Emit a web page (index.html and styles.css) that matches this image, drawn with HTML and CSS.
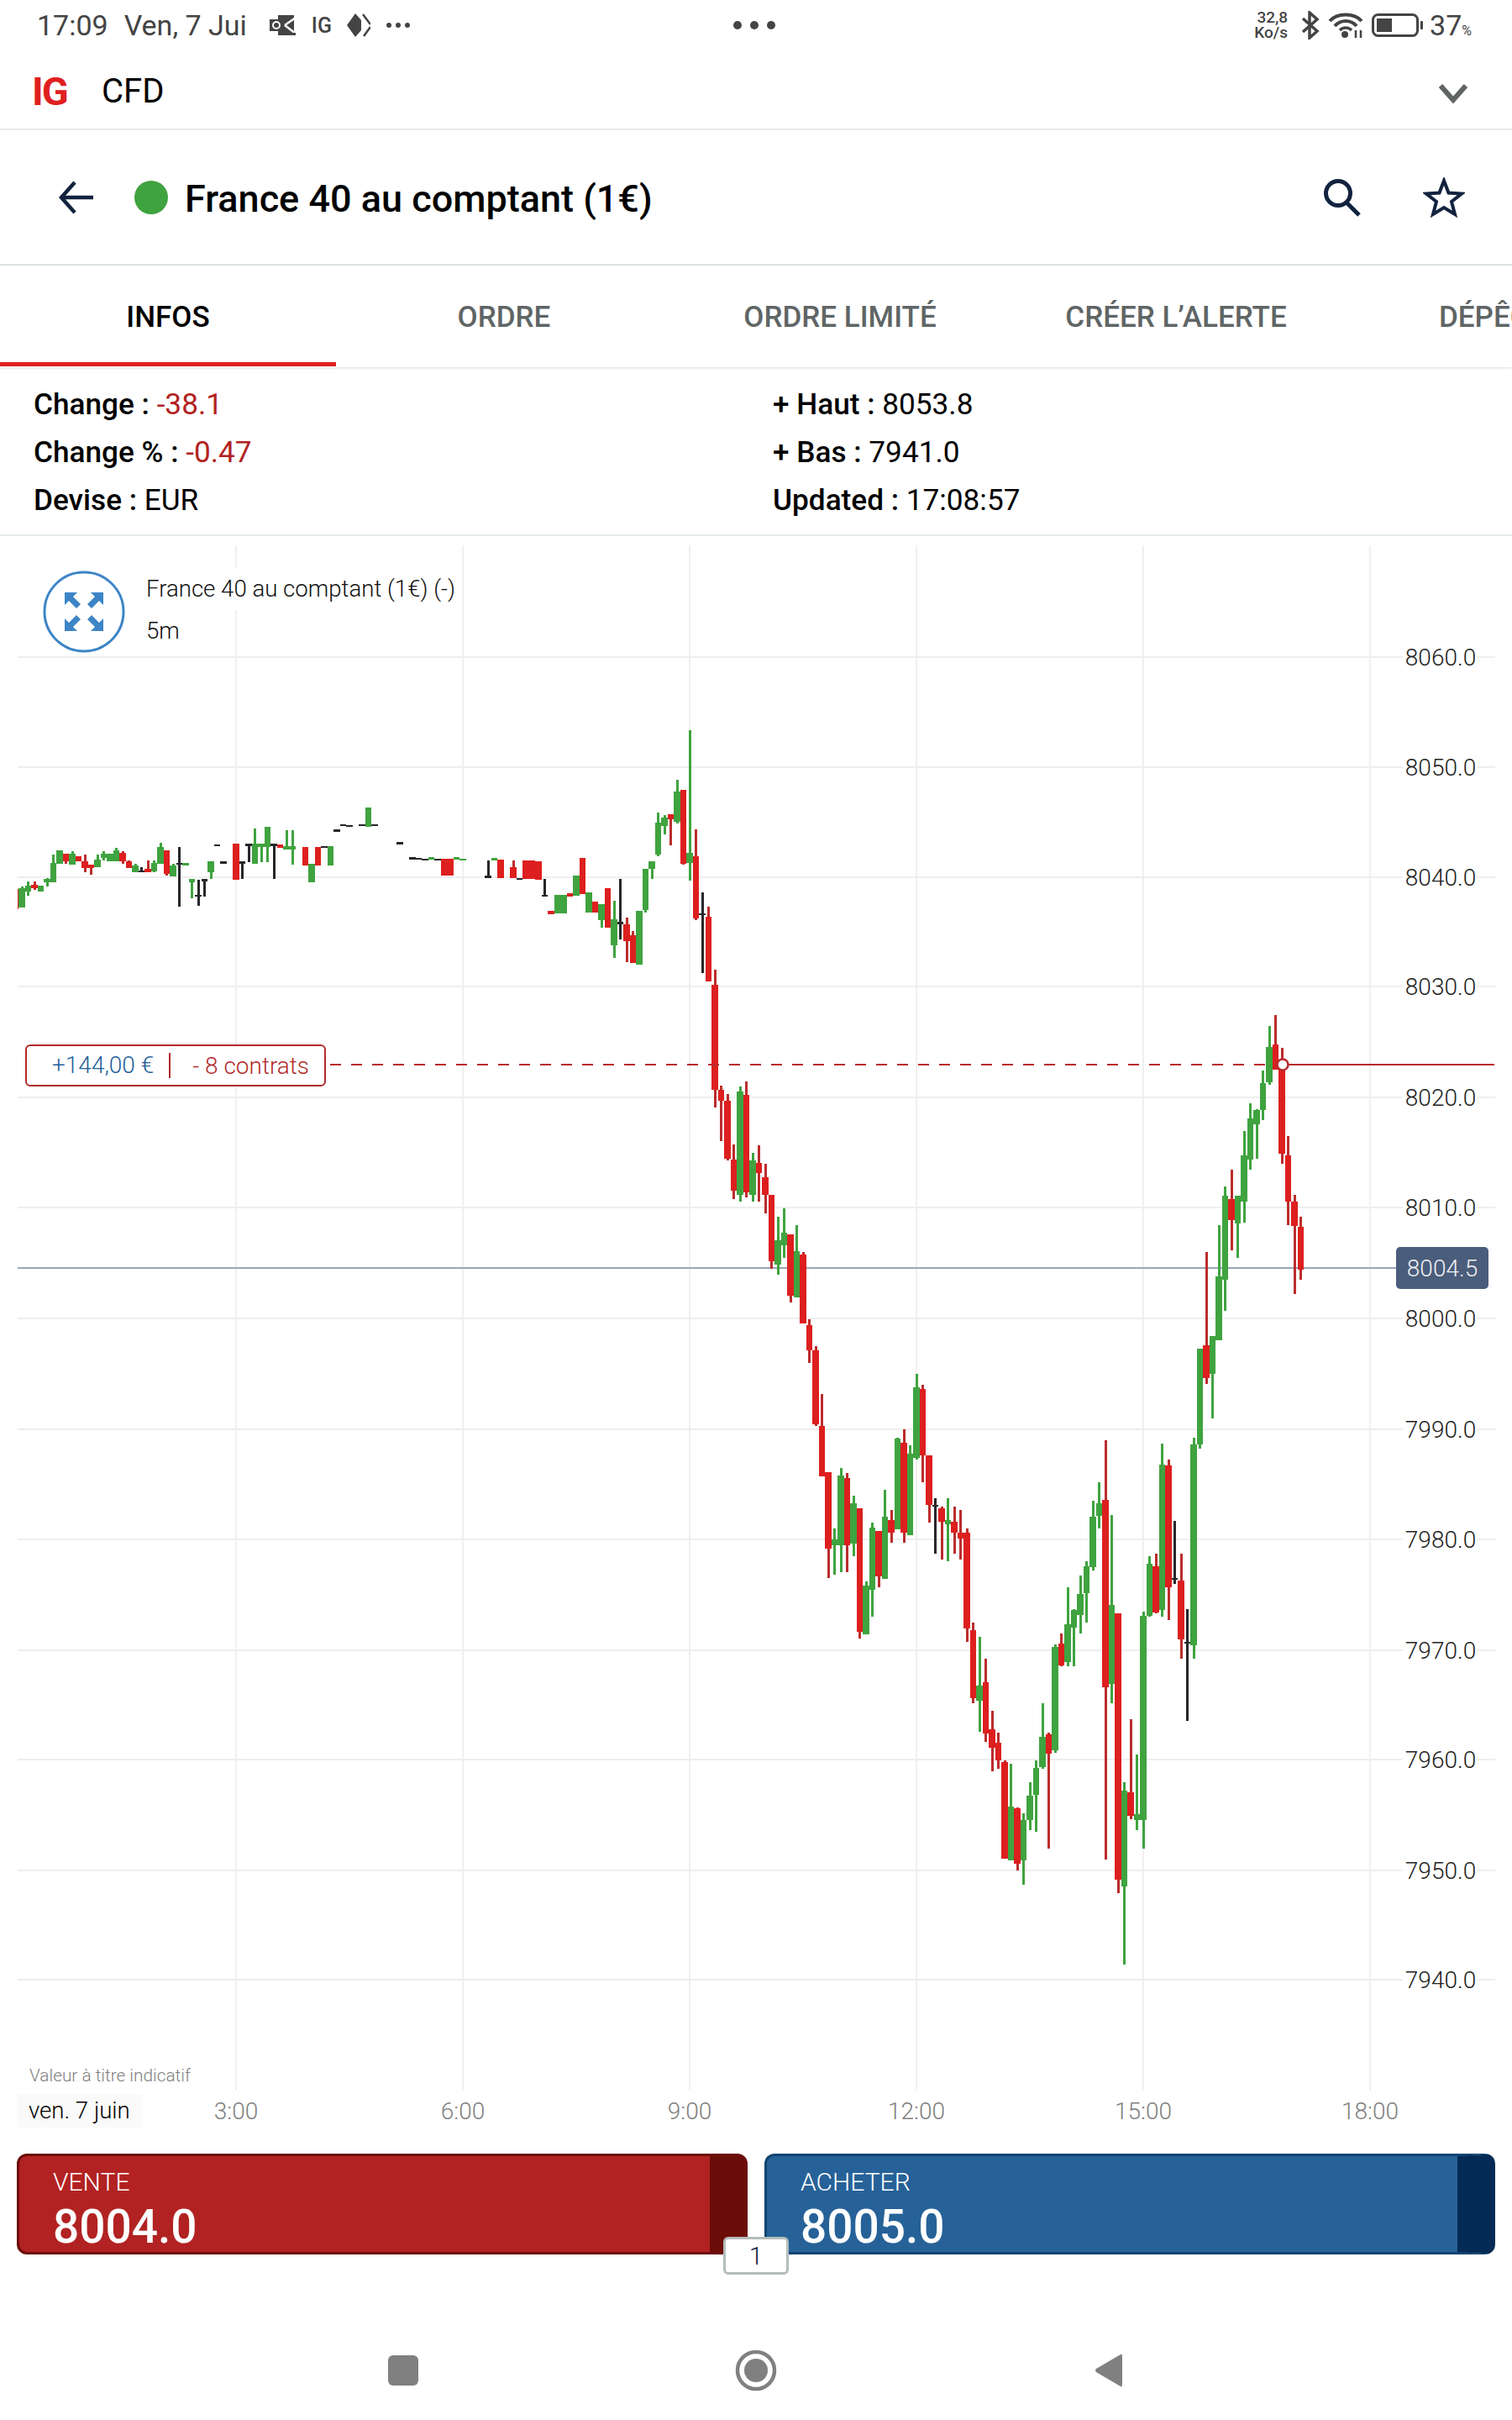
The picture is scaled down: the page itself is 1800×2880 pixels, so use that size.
FILE: index.html
```html
<!DOCTYPE html>
<html lang="fr">
<head>
  <meta charset="UTF-8">
  <meta name="viewport" content="width=device-width, initial-scale=1.0">
  <title>France 40 au comptant</title>
  <link rel="stylesheet" href="styles.css">
</head>
<body>

  <div class="status">
    <div class="status-left">
      <span class="status-time">17:09</span>
      <span class="status-date">Ven, 7 Jui</span>
      <svg class="ic-outlook" width="32" height="24" viewBox="0 0 32 24">
        <rect x="10" y="0" width="19" height="21" fill="#444"/>
        <rect x="0" y="5" width="16" height="14" fill="#444"/>
        <circle cx="8" cy="12" r="4" fill="none" stroke="#fff" stroke-width="2"/>
        <path d="M18 12 L31 3 M18 12 L31 22" stroke="#fff" stroke-width="2.5"/>
        <rect x="10" y="21" width="21" height="3" fill="#444"/>
      </svg>
      <span class="status-ig">IG</span>
      <svg class="ic-drive" width="28" height="28" viewBox="0 0 28 28">
        <path d="M10 0 L17 8 L17 20 L10 28 L0 14 Z" fill="#444"/>
        <path d="M19 1 L28 13 M28 16 L20 27" stroke="#444" stroke-width="2.5" fill="none"/>
      </svg>
      <span class="status-dots small"><i></i><i></i><i></i></span>
    </div>
    <div class="status-dots"><i></i><i></i><i></i></div>
    <div class="status-right">
      <span class="status-speed">32,8<br>Ko/s</span>
      <svg width="22" height="34" viewBox="0 0 22 34">
        <path d="M2 9 L19 24 L10 32 L10 2 L19 10 L2 25" fill="none" stroke="#444" stroke-width="3.5"/>
      </svg>
      <svg width="42" height="32" viewBox="0 0 42 32">
        <path d="M2 11 C11 1 31 1 40 11" fill="none" stroke="#444" stroke-width="4"/>
        <path d="M8 17 C15 9 27 9 34 17" fill="none" stroke="#444" stroke-width="4"/>
        <path d="M14 22 C18 18 24 18 28 22" fill="none" stroke="#444" stroke-width="3.5"/>
        <circle cx="20" cy="27" r="4" fill="#444"/>
        <path d="M33 22 V31 M39 22 V31" stroke="#444" stroke-width="2.5"/>
      </svg>
      <svg class="ic-batt" width="62" height="28" viewBox="0 0 62 28">
        <rect x="1.5" y="1.5" width="53" height="25" rx="6" fill="none" stroke="#444" stroke-width="3"/>
        <rect x="6" y="6" width="18" height="16" fill="#444"/>
        <rect x="58" y="9" width="3" height="10" rx="1" fill="#444"/>
      </svg>
      <span class="status-batt">37<small>%</small></span>
    </div>
  </div>

  <div class="appbar">
    <span class="logo">IG</span>
    <span class="appbar-title">CFD</span>
    <svg class="chevron" width="36" height="24" viewBox="0 0 36 24">
      <path d="M3 3 L18 20 L33 3" fill="none" stroke="#5f6565" stroke-width="6"/>
    </svg>
  </div>

  <div class="header">
    <svg width="42" height="40" viewBox="0 0 42 40">
      <path d="M41 20 H4 M19 2 L3 20 L19 38" fill="none" stroke="#12233f" stroke-width="4.5"/>
    </svg>
    <span class="market-dot"></span>
    <h1 class="market-name">France 40 au comptant (1€)</h1>
    <svg class="ic-search" width="46" height="46" viewBox="0 0 46 46">
      <circle cx="18" cy="18" r="14.5" fill="none" stroke="#12233f" stroke-width="5"/>
      <path d="M28 29 L43 44" stroke="#12233f" stroke-width="5"/>
    </svg>
    <svg class="ic-star" width="50" height="48" viewBox="0 0 50 48">
      <path d="M25 4 L30.5 18.5 L46 19.5 L34 29 L38 44 L25 36 L12 44 L16 29 L4 19.5 L19.5 18.5 Z" fill="none" stroke="#12233f" stroke-width="4"/>
    </svg>
  </div>

  <div class="tabs">
    <div class="tab active">INFOS</div>
    <div class="tab">ORDRE</div>
    <div class="tab">ORDRE LIMITÉ</div>
    <div class="tab">CRÉER L’ALERTE</div>
    <div class="tab tab-cut">DÉPÊCHES</div>
  </div>

  <div class="info">
    <div class="info-col">
      <div class="info-row"><b>Change :</b> <span class="neg">-38.1</span></div>
      <div class="info-row"><b>Change % :</b> <span class="neg">-0.47</span></div>
      <div class="info-row"><b>Devise :</b> EUR</div>
    </div>
    <div class="info-col">
      <div class="info-row"><b>+ Haut :</b> 8053.8</div>
      <div class="info-row"><b>+ Bas :</b> 7941.0</div>
      <div class="info-row"><b>Updated :</b> 17:08:57</div>
    </div>
  </div>

  <div class="chart">
    <svg id="chart-svg" width="1800" height="1925" viewBox="0 638 1800 1925"></svg>

    <div class="legend">
      <svg width="100" height="100" viewBox="0 0 100 100">
        <circle cx="50" cy="50" r="47" fill="#fff" stroke="#3d85c6" stroke-width="3"/>
        <g fill="#3d85c6">
          <path id="arr" d="M27 27 H42 L37 32 L46 41 L41 46 L32 37 L27 42 Z"/>
          <use href="#arr" transform="translate(100 0) scale(-1 1)"/>
          <use href="#arr" transform="translate(0 100) scale(1 -1)"/>
          <use href="#arr" transform="translate(100 100) scale(-1 -1)"/>
        </g>
      </svg>
      <div class="legend-text">
        <div>France 40 au comptant (1€) (-)</div>
        <div>5m</div>
      </div>
    </div>

    <div class="pos-tag">
      <span class="pos-pl">+144,00 €</span>
      <span class="pos-size">- 8 contrats</span>
    </div>

    <div class="price-tag">8004.5</div>
    <div class="disclaimer">Valeur à titre indicatif</div>
    <div class="date-tag">ven. 7 juin</div>
  </div>

  <div class="trade">
    <div class="trade-btn sell">
      <div class="trade-label">VENTE</div>
      <div class="trade-price">8004.0</div>
    </div>
    <div class="trade-btn buy">
      <div class="trade-label">ACHETER</div>
      <div class="trade-price">8005.0</div>
    </div>
    <div class="qty">1</div>
  </div>

  <div class="nav">
    <span class="nav-square"></span>
    <svg width="50" height="50" viewBox="0 0 50 50">
      <circle cx="25" cy="25" r="22" fill="none" stroke="#808080" stroke-width="4.5"/>
      <circle cx="25" cy="25" r="14" fill="#808080"/>
    </svg>
    <svg width="34" height="42" viewBox="0 0 34 42">
      <path d="M31 2 Q33 1 33 4 V38 Q33 41 31 40 L2 23 Q0 21 2 19 Z" fill="#808080"/>
    </svg>
  </div>

  <script src="chart.js"></script>
</body>
</html>
```

FILE: styles.css
```css
* {
  box-sizing: border-box;
}

body {
  font-family: 'Roboto', 'Liberation Sans', sans-serif;
  background-color: #fff;
  color: #000;
  margin: 0;
  width: 1800px;
  height: 2880px;
  overflow: hidden;
}

.status {
  height: 60px;
  padding: 0 48px 0 44px;
  display: grid;
  grid-template-columns: 1fr auto 1fr;
  align-items: center;
  color: #444;
}

.status-left {
  display: flex;
  align-items: center;
}

.status-time,
.status-date {
  font-size: 34px;
  margin-right: 19px;
}

.status-date {
  margin-right: 27px;
}

.status-ig {
  font-size: 25px;
  font-weight: 500;
  margin: 0 18px;
}

.status-dots {
  display: flex;
  gap: 10px;
}

.status-dots i {
  width: 10px;
  height: 10px;
  border-radius: 50%;
  background-color: #444;
}

.status-dots.small {
  gap: 5px;
  margin-left: 19px;
}

.status-dots.small i {
  width: 6px;
  height: 6px;
}

.status-right {
  display: flex;
  align-items: center;
  justify-content: flex-end;
  gap: 10px;
}

.status-speed {
  margin-right: 6px;
  font-size: 19px;
  font-weight: 500;
  line-height: 18px;
  text-align: right;
}

.ic-batt {
  margin-right: -1px;
}

.status-batt {
  font-size: 34px;
  margin-left: -2px;
}

.status-batt small {
  font-size: 16px;
}

.appbar {
  height: 95px;
  padding: 4px 52px 0 38px;
  display: flex;
  align-items: center;
  border-bottom: 2px solid #e6ecec;
}

.logo {
  color: #e02020;
  font-size: 47px;
  font-weight: 700;
  letter-spacing: -2px;
  width: 83px;
}

.appbar-title {
  font-size: 40px;
  flex: 1;
}

.chevron {
  margin-top: 4px;
}

.header {
  height: 161px;
  padding: 0 56px 0 70px;
  display: flex;
  align-items: center;
  border-bottom: 2px solid #dfe6e6;
}

.market-dot {
  width: 40px;
  height: 40px;
  margin: 0 20px 0 48px;
  border-radius: 50%;
  background-color: #3fa33f;
}

.market-name {
  flex: 1;
  margin: 0;
  padding-top: 3px;
  font-size: 45px;
  font-weight: 500;
}

.ic-search {
  margin-left: 1px;
}

.ic-star {
  margin-left: 73px;
}

.tabs {
  height: 121px;
  display: flex;
  overflow: hidden;
  box-shadow: 0 1px 3px rgba(0, 0, 0, 0.15);
  position: relative;
}

.tab {
  flex: 0 0 400px;
  height: 120px;
  padding-top: 2px;
  display: flex;
  align-items: center;
  justify-content: center;
  font-size: 35px;
  font-weight: 500;
  color: #5f6565;
  white-space: nowrap;
}

.tab.active {
  color: #000;
  padding-top: 7px;
  border-bottom: 5px solid #e02020;
}

.tab-cut {
  justify-content: flex-start;
  padding-left: 113px;
}

.info {
  height: 201px;
  padding: 16px 0 0 40px;
  display: flex;
  border-bottom: 2px solid #e6ecec;
}

.info-col {
  width: 880px;
}

.info-row {
  font-size: 35.2px;
  line-height: 57px;
}

.info-row b {
  font-weight: 500;
}

.neg {
  color: #b22222;
}

.chart {
  position: relative;
  height: 1925px;
}

#chart-svg {
  display: block;
}

.axis-y {
  font-size: 28px;
  font-weight: 300;
  fill: #222;
}

.axis-x {
  font-size: 28px;
  font-weight: 300;
  fill: #808080;
}

.legend {
  position: absolute;
  left: 50px;
  top: 40px;
  display: flex;
  gap: 24px;
}

.legend-text {
  margin-top: -2px;
  font-size: 27.6px;
  font-weight: 300;
  line-height: 50px;
  color: #111;
}

.legend-text div {
  width: fit-content;
  background-color: #fff;
}

.pos-tag {
  position: absolute;
  left: 30px;
  top: 605px;
  width: 358px;
  height: 50px;
  padding-left: 30px;
  display: flex;
  align-items: center;
  background-color: #fff;
  border: 2px solid #b22a2a;
  border-radius: 6px;
  font-size: 28px;
  font-weight: 300;
}

.pos-pl {
  color: #1f6098;
  padding-right: 18px;
  border-right: 2px solid #b22a2a;
  line-height: 30px;
  margin-right: 26px;
}

.pos-size {
  color: #b22a2a;
}

.price-tag {
  position: absolute;
  left: 1662px;
  top: 846px;
  width: 110px;
  height: 50px;
  display: flex;
  align-items: center;
  justify-content: center;
  background-color: #4a5d7c;
  border-radius: 5px;
  color: #f0f0f0;
  font-size: 28px;
  font-weight: 300;
}

.disclaimer {
  position: absolute;
  left: 35px;
  top: 1820px;
  font-size: 20.8px;
  font-weight: 300;
  color: #808080;
}

.date-tag {
  position: absolute;
  left: 20px;
  top: 1854px;
  height: 40px;
  padding: 0 14px;
  line-height: 40px;
  background-color: #fafafa;
  font-size: 27.6px;
  font-weight: 300;
}

.trade {
  position: relative;
  height: 120px;
  padding: 0 20px;
  display: flex;
  gap: 20px;
}

.trade-btn {
  flex: 1;
  padding: 16px 0 0 40px;
  border: 3px solid;
  border-right-width: 45px;
  border-radius: 12px;
  color: #fff;
}

.sell {
  background-color: #b22222;
  border-color: #6b0d08;
}

.buy {
  background-color: #266298;
  border-color: #0f4470;
  border-right-color: #032b55;
}

.trade-label {
  font-size: 30px;
  font-weight: 300;
  line-height: 30px;
}

.trade-price {
  margin-top: 8px;
  font-size: 55px;
  font-weight: 500;
  line-height: 60px;
}

.qty {
  position: absolute;
  left: 861px;
  top: 99px;
  width: 78px;
  height: 45px;
  display: flex;
  align-items: center;
  justify-content: center;
  background-color: #fff;
  border: 3px solid #b4bcbc;
  border-radius: 6px;
  color: #12233f;
  font-size: 30px;
  font-weight: 300;
}

.nav {
  height: 60px;
  margin-top: 108px;
  display: grid;
  grid-template-columns: repeat(3, 420px);
  justify-content: center;
  justify-items: center;
  align-items: center;
}

.nav-square {
  width: 36px;
  height: 36px;
  border-radius: 6px;
  background-color: #808080;
}
```

FILE: chart.js
```js
// candles in page pixels: [slot, colour, wick top, body top, body bottom, wick bottom]
const candles = [
  [0,'r',1058,1058,1082,1082],[1,'g',1055,1057,1080,1080],[2,'g',1049,1054,1061,1066],[3,'r',1049,1053,1057,1059],
  [4,'g',1054,1054,1061,1061],[5,'g',1045,1046,1050,1055],[6,'g',1017,1027,1050,1050],[7,'g',1012,1012,1028,1028],
  [8,'r',1016,1016,1025,1028],[9,'g',1013,1016,1029,1029],[10,'r',1019,1019,1025,1025],[11,'r',1017,1025,1033,1038],
  [12,'r',1029,1029,1033,1041],[13,'g',1017,1023,1032,1032],[14,'g',1013,1016,1021,1024],[15,'g',1016,1016,1025,1025],
  [16,'g',1009,1012,1025,1025],[17,'r',1013,1015,1025,1028],[18,'r',1024,1025,1033,1033],[19,'g',1028,1030,1038,1038],
  [20,'k',1032,1036,1038,1038],[21,'r',1024,1034,1038,1038],[22,'g',1024,1027,1037,1038],[23,'g',1003,1008,1028,1028],
  [24,'r',1012,1012,1040,1042],[25,'g',1028,1030,1043,1043],[26,'k',1008,1027,1029,1079],[27,'g',1027,1027,1030,1030],
  [28,'g',1046,1046,1050,1069],[29,'k',1047,1065,1067,1078],[30,'k',1046,1046,1049,1067],[31,'g',1025,1025,1038,1046],
  [32,'k',1005,1005,1007,1007],[33,'k',1025,1025,1028,1028],[35,'r',1004,1004,1047,1047],[36,'k',1025,1025,1028,1046],
  [37,'k',1004,1004,1007,1026],[38,'g',986,1004,1028,1028],[39,'g',1004,1004,1008,1026],[40,'g',984,984,1008,1026],
  [41,'k',1004,1004,1007,1046],[42,'r',1005,1005,1009,1009],[43,'g',988,1007,1011,1011],[44,'g',988,1007,1011,1029],
  [46,'r',1008,1008,1030,1030],[47,'g',1028,1028,1050,1050],[48,'r',1008,1008,1030,1030],[49,'k',1007,1007,1009,1009],
  [50,'g',1007,1007,1030,1030],[51,'k',987,987,990,990],[52,'k',981,981,983,983],[53,'k',982,982,984,984],
  [55,'k',981,981,983,983],[56,'g',961,961,984,984],[57,'k',981,981,983,983],[61,'k',1002,1002,1005,1005],
  [63,'k',1020,1020,1023,1023],[64,'k',1021,1021,1023,1023],[65,'k',1022,1022,1024,1024],[66,'g',1020,1020,1023,1023],
  [67,'k',1022,1022,1024,1024],[68,'r',1022,1022,1042,1042],[69,'r',1022,1022,1042,1042],[70,'g',1020,1020,1023,1023],
  [71,'g',1022,1022,1024,1024],[75,'k',1024,1042,1045,1045],[76,'g',1021,1021,1024,1024],[77,'r',1023,1023,1045,1045],
  [79,'r',1024,1032,1045,1045],[80,'k',1045,1045,1047,1047],[81,'r',1024,1024,1046,1046],[82,'r',1024,1024,1046,1046],
  [83,'r',1025,1025,1047,1047],[84,'k',1046,1065,1067,1067],[85,'r',1084,1084,1088,1088],[86,'g',1065,1065,1087,1087],
  [87,'g',1065,1065,1087,1087],[88,'r',1063,1063,1067,1067],[89,'g',1042,1042,1066,1066],[90,'r',1021,1021,1064,1064],
  [91,'g',1062,1062,1086,1086],[92,'r',1073,1073,1086,1086],[93,'g',1076,1076,1095,1104],[94,'r',1057,1057,1104,1104],
  [95,'g',1072,1094,1125,1140],[96,'k',1046,1097,1100,1118],[97,'r',1092,1100,1120,1145],[98,'r',1108,1113,1146,1146],
  [99,'g',1084,1084,1148,1148],[100,'g',1034,1034,1083,1086],[101,'g',1025,1025,1034,1046],[102,'g',967,979,1017,1019],
  [103,'g',970,973,983,993],[104,'r',969,969,975,1006],[105,'g',928,942,978,980],[106,'r',940,940,1028,1029],
  [107,'g',869,1015,1027,1048],[108,'r',987,1019,1093,1095],[109,'k',1062,1087,1089,1158],[110,'r',1079,1091,1168,1168],
  [111,'r',1154,1172,1297,1318],[112,'r',1292,1297,1310,1358],[113,'r',1302,1310,1379,1381],[114,'r',1362,1380,1417,1427],
  [115,'g',1293,1299,1422,1430],[116,'r',1287,1303,1419,1425],[117,'g',1372,1381,1422,1430],[118,'r',1363,1384,1396,1430],
  [119,'r',1385,1401,1422,1444],[120,'r',1422,1422,1501,1510],[121,'g',1448,1476,1505,1517],[122,'g',1438,1467,1482,1497],
  [123,'r',1469,1469,1542,1550],[124,'g',1458,1489,1544,1544],[125,'r',1490,1493,1575,1575],[126,'r',1570,1577,1607,1622],
  [127,'r',1602,1607,1695,1697],[128,'r',1659,1697,1757,1757],[129,'r',1752,1752,1843,1878],[130,'g',1819,1832,1839,1874],
  [131,'g',1747,1756,1839,1871],[132,'r',1753,1759,1839,1871],[133,'g',1780,1789,1837,1852],[134,'r',1795,1795,1942,1950],
  [135,'g',1882,1887,1945,1945],[136,'g',1812,1818,1892,1924],[137,'r',1822,1822,1876,1889],[138,'g',1773,1805,1879,1879],
  [139,'r',1797,1809,1824,1836],[140,'g',1711,1712,1820,1820],[141,'r',1701,1717,1824,1836],[142,'g',1720,1730,1827,1827],
  [143,'g',1635,1651,1735,1737],[144,'r',1648,1653,1732,1764],[145,'r',1732,1732,1791,1812],[146,'k',1783,1791,1793,1849],
  [147,'r',1793,1795,1811,1856],[148,'g',1783,1809,1814,1858],[149,'r',1793,1811,1824,1849],[150,'r',1797,1824,1831,1856],
  [151,'r',1819,1824,1938,1954],[152,'r',1931,1940,2021,2027],[153,'g',1948,2006,2024,2061],[154,'r',1974,2002,2063,2073],
  [155,'r',2036,2058,2080,2108],[156,'r',2062,2074,2095,2105],[157,'r',2095,2097,2212,2212],[158,'g',2099,2150,2214,2214],
  [159,'r',2151,2152,2218,2226],[160,'g',2158,2166,2214,2243],[161,'g',2121,2137,2166,2178],[162,'g',2095,2104,2136,2180],
  [163,'g',2027,2067,2103,2105],[164,'r',2062,2064,2087,2200],[165,'g',1957,1960,2083,2086],[166,'r',1944,1956,1982,1983],
  [167,'g',1889,1933,1978,1983],[168,'g',1915,1916,1937,1983],[169,'g',1875,1897,1922,1944],[170,'g',1858,1864,1896,1931],
  [171,'g',1786,1805,1865,1869],[172,'g',1764,1789,1804,1819],[173,'r',1714,1785,2008,2213],[174,'g',1803,1910,2004,2027],
  [175,'r',1920,1920,2237,2253],[176,'g',2121,2131,2245,2338],[177,'r',2046,2133,2161,2165],[178,'g',2088,2159,2166,2178],
  [179,'g',1918,1923,2166,2200],[180,'g',1852,1861,1923,1924],[181,'r',1849,1864,1919,1920],[182,'g',1718,1743,1916,1924],
  [183,'r',1737,1744,1889,1928],[184,'k',1810,1878,1880,1885],[185,'r',1849,1881,1951,1974],[186,'k',1915,1954,1956,2048],
  [187,'g',1711,1719,1958,1974],[188,'g',1605,1605,1719,1724],[189,'r',1490,1601,1640,1647],[190,'g',1590,1590,1635,1688],
  [191,'g',1458,1519,1595,1595],[192,'g',1412,1423,1523,1560],[193,'r',1392,1427,1452,1488],[194,'g',1423,1423,1456,1497],
  [195,'g',1346,1375,1430,1455],[196,'g',1313,1331,1380,1392],[197,'g',1320,1321,1338,1379],[198,'g',1274,1289,1321,1333],
  [199,'g',1221,1246,1288,1291],[200,'r',1208,1243,1273,1273],[201,'r',1247,1267,1373,1385],[202,'r',1352,1375,1430,1458],
  [203,'r',1422,1430,1459,1540],[204,'r',1448,1460,1511,1523]
];

const bodyColour = { g: '#3fa33f', r: '#dd1f1f', k: '#26262a' };
const wickColour = { g: '#3fa33f', r: '#bb2c2c', k: '#26262a' };

const gridY = [782, 913, 1044, 1174, 1306, 1437, 1569, 1701, 1832, 1964, 2094, 2226, 2356];
const priceLabels = ['8060.0', '8050.0', '8040.0', '8030.0', '8020.0', '8010.0', '8000.0',
  '7990.0', '7980.0', '7970.0', '7960.0', '7950.0', '7940.0'];
const gridX = [281, 551, 821, 1091, 1361, 1631];
const timeLabels = ['3:00', '6:00', '9:00', '12:00', '15:00', '18:00'];

let out = '';

gridX.forEach((x, i) => {
  out += `<rect x="${x - 1}" y="649" width="2" height="1839" fill="#f0f0f0"/>`;
  out += `<text class="axis-x" x="${x}" y="2522" text-anchor="middle">${timeLabels[i]}</text>`;
});

gridY.forEach(y => {
  out += `<rect x="21" y="${y - 1}" width="1759" height="2" fill="#eeeeee"/>`;
});

out += '<rect x="21" y="1508" width="1641" height="2" fill="#9aa5b5"/>';

out += '<svg x="21" y="638" width="1800" height="1925" viewBox="21 638 1800 1925" shape-rendering="crispEdges">';
candles.forEach(([slot, c, wickTop, top, bottom, wickBottom]) => {
  const cx = 18.5 + slot * 7.5;
  out += `<rect x="${cx - 1.5}" y="${wickTop}" width="3" height="${wickBottom - wickTop}" fill="${wickColour[c]}"/>`;
  out += `<rect x="${cx - 3.75}" y="${top}" width="7.5" height="${bottom - top}" fill="${bodyColour[c]}"/>`;
});
out += '</svg>';

// position line
out += '<line x1="393" y1="1267" x2="1527" y2="1267" stroke="#b82a2e" stroke-width="2" stroke-dasharray="13 12"/>';
out += '<line x1="1527" y1="1267" x2="1779" y2="1267" stroke="#b82a2e" stroke-width="2"/>';
out += '<circle cx="1527" cy="1267" r="6.5" fill="#fff" stroke="#b82a2e" stroke-width="2.5"/>';

gridY.forEach((y, i) => {
  out += `<rect x="1670" y="${y - 16}" width="88" height="32" fill="#fff"/>`;
  out += `<text class="axis-y" x="1715" y="${y + 10}" text-anchor="middle">${priceLabels[i]}</text>`;
});

document.getElementById('chart-svg').innerHTML = out;
```
